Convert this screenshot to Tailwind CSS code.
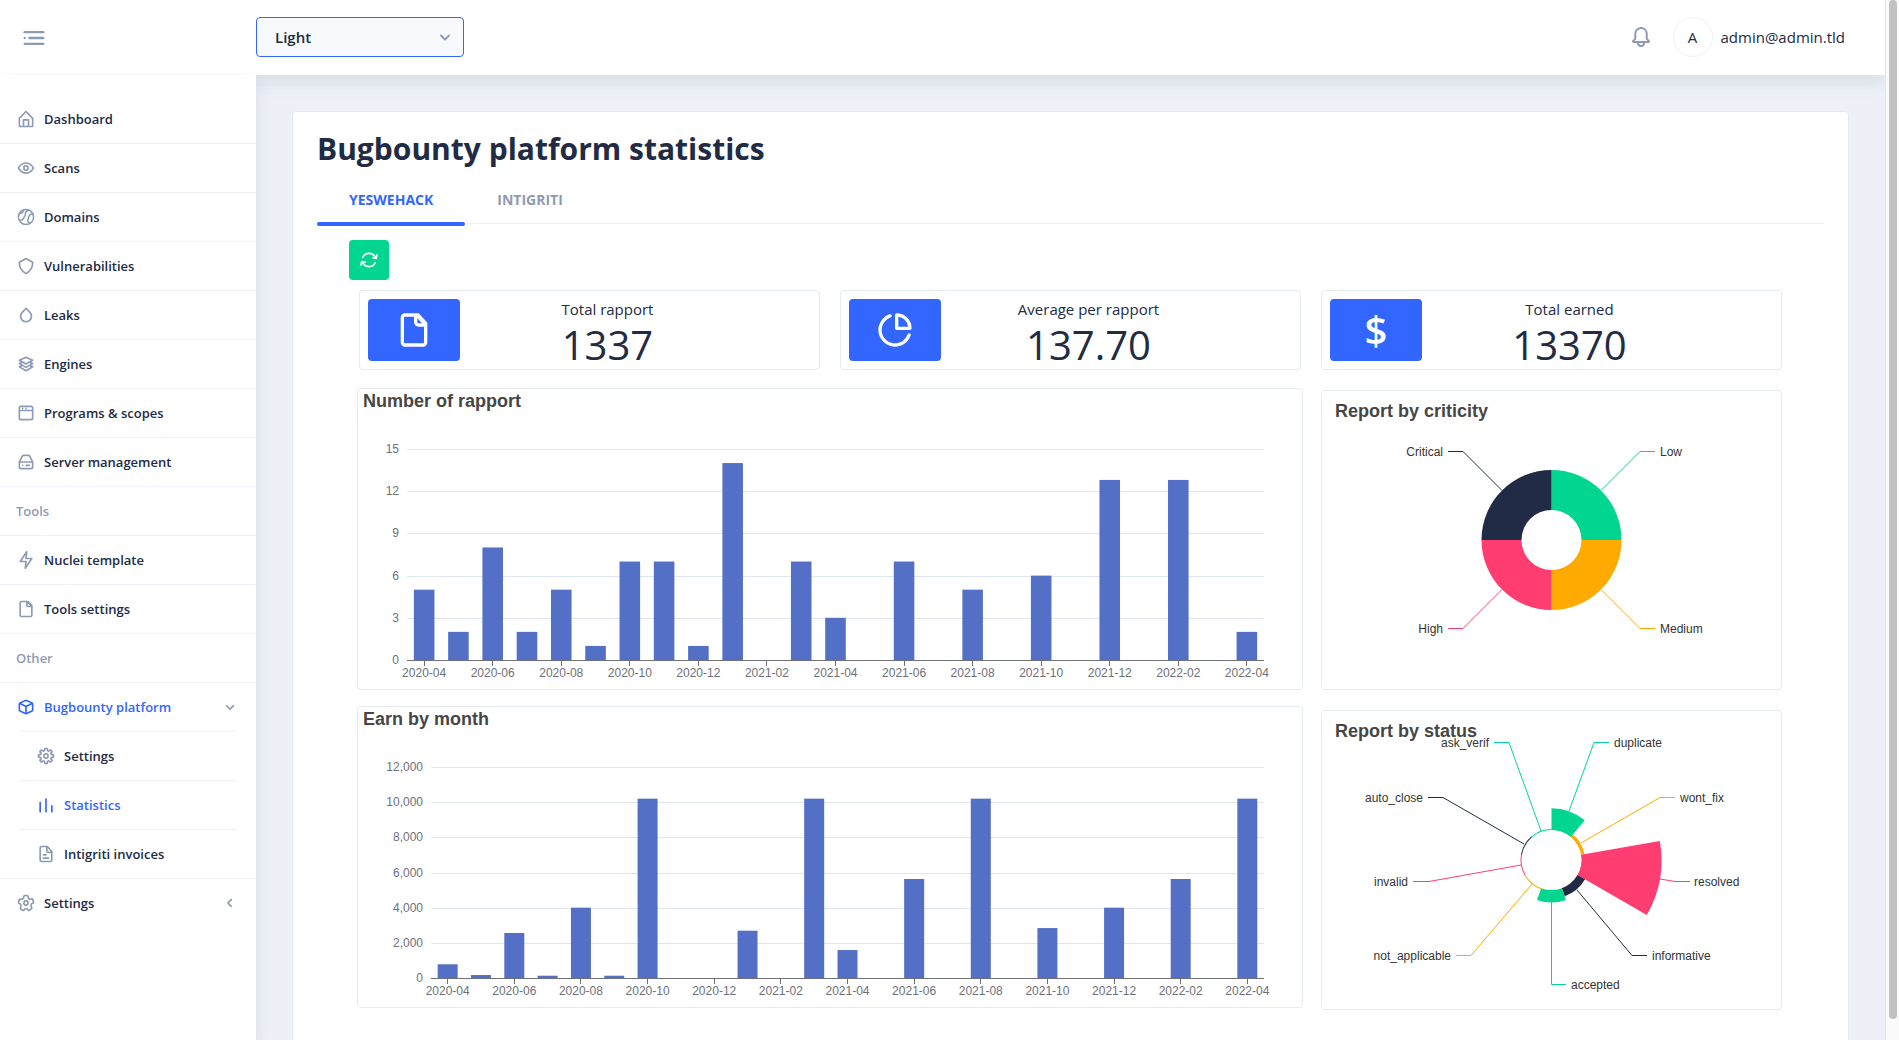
<!DOCTYPE html>
<html lang="en">
<head>
<meta charset="utf-8">
<title>Bugbounty platform statistics</title>
<meta name="viewport" content="width=device-width, initial-scale=1">
<script src="https://cdn.jsdelivr.net/npm/@tailwindcss/browser@4"></script>
</head>
<body class="flex h-screen overflow-hidden bg-[#edf1f7] font-['Open_Sans',sans-serif] text-[#222b45]">

<svg class="hidden" aria-hidden="true">
  <symbol id="i-menu" viewBox="0 0 24 24"><circle cx="4" cy="12" r="1"/><rect x="7" y="11" width="14" height="2" rx="1"/><rect x="3" y="16" width="18" height="2" rx="1"/><rect x="3" y="6" width="18" height="2" rx="1"/></symbol>
  <symbol id="i-down" viewBox="0 0 24 24"><path d="M12 15.5a1 1 0 0 1-.71-.29l-4-4a1 1 0 1 1 1.42-1.42L12 13.1l3.3-3.18a1 1 0 1 1 1.38 1.44l-4 3.86a1 1 0 0 1-.68.28z"/></symbol>
  <symbol id="i-left" viewBox="0 0 24 24"><path d="M13.36 17a1 1 0 0 1-.72-.31l-3.86-4a1 1 0 0 1 0-1.4l4-4a1 1 0 1 1 1.42 1.42L10.9 12l3.18 3.3a1 1 0 0 1 0 1.41 1 1 0 0 1-.72.29z"/></symbol>
  <symbol id="i-bell" viewBox="0 0 24 24"><path d="M20.52 15.21l-1.8-1.81V8.94a6.86 6.86 0 0 0-5.82-6.88 6.74 6.74 0 0 0-7.62 6.67v4.67l-1.8 1.81A1.64 1.64 0 0 0 4.64 18H8v.34A3.84 3.84 0 0 0 12 22a3.84 3.84 0 0 0 4-3.66V18h3.36a1.64 1.64 0 0 0 1.16-2.79zM14 18.34A1.88 1.88 0 0 1 12 20a1.88 1.88 0 0 1-2-1.66V18h4zM5.51 16l1.18-1.18a2 2 0 0 0 .59-1.42V8.73A4.73 4.73 0 0 1 8.9 5.17 4.67 4.67 0 0 1 12.64 4a4.86 4.86 0 0 1 4.08 4.9v4.5a2 2 0 0 0 .58 1.42L18.49 16z"/></symbol>
  <symbol id="i-home" viewBox="0 0 24 24"><path d="M20.42 10.18L12.71 2.3a1 1 0 0 0-1.42 0l-7.71 7.89A2 2 0 0 0 3 11.62V20a2 2 0 0 0 1.89 2h14.22A2 2 0 0 0 21 20v-8.38a2.07 2.07 0 0 0-.58-1.44zM10 20v-6h4v6zm9 0h-3v-7a1 1 0 0 0-1-1H9a1 1 0 0 0-1 1v7H5v-8.42l7-7.15 7 7.19z"/></symbol>
  <symbol id="i-eye" viewBox="0 0 24 24"><path d="M21.87 11.5c-.64-1.11-4.16-6.68-10.14-6.5-5.53.14-8.73 5-9.6 6.5a1 1 0 0 0 0 1c.63 1.09 4 6.5 9.89 6.5h.25c5.53-.14 8.74-5 9.6-6.5a1 1 0 0 0 0-1zM12.22 17c-4.31.1-7.12-3.59-8-5 1-1.61 3.61-4.9 7.61-5 4.29-.11 7.11 3.59 8 5-1.03 1.61-3.61 4.9-7.61 5z"/><path d="M12 8.5a3.5 3.5 0 1 0 3.5 3.5A3.5 3.5 0 0 0 12 8.5zm0 5a1.5 1.5 0 1 1 1.5-1.5 1.5 1.5 0 0 1-1.5 1.5z"/></symbol>
  <symbol id="i-globe" viewBox="0 0 24 24"><g fill="none" stroke="currentColor" stroke-width="1.8" stroke-linecap="round"><circle cx="12" cy="12" r="9.1"/><path d="M15.2 3.6c-3 1.4-4.400 3-4 5.200.4 2.400-1.600 2.600-2 4.600-.3 1.800-1.800 2.400-4.600 2.600"/><path d="M5 7.200c1.800.8 2.800.2 4.200-3.200"/><path d="M20.200 8.600c-2.800-.4-4.400 1-4.800 3.400-.3 1.900-1.600 2.600-1.300 4.600.3 1.700 1.500 2.400 2.700 2.900"/></g></symbol>
  <symbol id="i-shield" viewBox="0 0 24 24"><path d="M12 21.850a2 2 0 0 1-1-.25l-.3-.17A15.170 15.170 0 0 1 3 8.230v-.14a2 2 0 0 1 1-1.750l7-3.940a2 2 0 0 1 2 0l7 3.940a2 2 0 0 1 1 1.750v.14a15.170 15.170 0 0 1-7.720 13.200l-.3.17a2 2 0 0 1-.98.25zm0-17.700L5 8.090v.14a13.150 13.150 0 0 0 6.700 11.450l.3.17.3-.17A13.150 13.150 0 0 0 19 8.230v-.14z"/></symbol>
  <symbol id="i-drop" viewBox="0 0 24 24"><path d="M12 21.100a7.400 7.400 0 0 1-5.280-2.280 7.730 7.730 0 0 1 .1-10.770l4.640-4.650a.94.94 0 0 1 .71-.3 1 1 0 0 1 .71.31l4.560 4.720a7.730 7.730 0 0 1-.09 10.770A7.330 7.330 0 0 1 12 21.100zm.13-15.570L8.240 9.450a5.740 5.740 0 0 0-.07 8A5.430 5.430 0 0 0 12 19.100a5.420 5.420 0 0 0 3.900-1.610 5.720 5.720 0 0 0 .06-8z"/></symbol>
  <symbol id="i-layers" viewBox="0 0 24 24"><path d="M21 11.350a1 1 0 0 0-.61-.86l-2.150-.92 2.260-1.300a1 1 0 0 0 .5-.92 1 1 0 0 0-.61-.86l-8-3.410a1 1 0 0 0-.78 0l-8 3.410a1 1 0 0 0-.61.86 1 1 0 0 0 .5.92l2.260 1.300-2.150.92a1 1 0 0 0-.61.86 1 1 0 0 0 .5.92l2.260 1.300-2.150.92a1 1 0 0 0-.61.86 1 1 0 0 0 .5.92l8 4.600a1 1 0 0 0 1 0l8-4.600a1 1 0 0 0 .5-.92 1 1 0 0 0-.61-.86l-2.150-.92 2.260-1.300a1 1 0 0 0 .5-.92zm-9-6.260l5.760 2.450L12 10.850 6.240 7.540zm-.5 7.780a1 1 0 0 0 1 0l3.570-2 1.690.72L12 14.850l-5.760-3.310 1.690-.72zm6.260 2.670L12 18.850l-5.760-3.310 1.690-.72 3.570 2.050a1 1 0 0 0 1 0l3.570-2.050z"/></symbol>
  <symbol id="i-browser" viewBox="0 0 24 24"><path d="M18 3H6a3 3 0 0 0-3 3v12a3 3 0 0 0 3 3h12a3 3 0 0 0 3-3V6a3 3 0 0 0-3-3zM6 5h12a1 1 0 0 1 1 1v2H5V6a1 1 0 0 1 1-1zm12 14H6a1 1 0 0 1-1-1v-8h14v8a1 1 0 0 1-1 1z"/><circle cx="8" cy="6.500" r="1"/><circle cx="12" cy="6.500" r="1"/></symbol>
  <symbol id="i-drive" viewBox="0 0 24 24"><path d="M20.790 11.340l-3.340-6.680A3 3 0 0 0 14.760 3H9.240a3 3 0 0 0-2.690 1.660l-3.340 6.680a2 2 0 0 0-.21.9V18a3 3 0 0 0 3 3h12a3 3 0 0 0 3-3v-5.760a2 2 0 0 0-.21-.9zM8.340 5.550a1 1 0 0 1 .9-.55h5.520a1 1 0 0 1 .9.55L18.380 11H5.620zM18 19H6a1 1 0 0 1-1-1v-5h14v5a1 1 0 0 1-1 1z"/><path d="M16 15h-4a1 1 0 0 0 0 2h4a1 1 0 0 0 0-2z"/><circle cx="8" cy="16" r="1"/></symbol>
  <symbol id="i-flash" viewBox="0 0 24 24"><path d="M11.110 23a1 1 0 0 1-.34-.06 1 1 0 0 1-.65-1.050l.77-7.090H5a1 1 0 0 1-.83-1.560l7.890-11.800a1 1 0 0 1 1.170-.38 1 1 0 0 1 .65 1l-.77 7.140H19a1 1 0 0 1 .83 1.560l-7.890 11.800a1 1 0 0 1-.83.44zM6.870 12.800H12a1 1 0 0 1 .74.33 1 1 0 0 1 .25.78l-.45 4.150 4.590-6.860H12a1 1 0 0 1-1-1.110l.45-4.150z"/></symbol>
  <symbol id="i-file" viewBox="0 0 24 24"><path d="M19.740 7.330l-4.440-5a1 1 0 0 0-.74-.33h-8A2.530 2.530 0 0 0 4 4.500v15A2.530 2.530 0 0 0 6.560 22h10.880A2.530 2.530 0 0 0 20 19.500V8a1 1 0 0 0-.26-.67zM14 5l2.740 3h-2a.79.79 0 0 1-.74-.85zm3.440 15H6.560a.53.53 0 0 1-.56-.5v-15a.53.53 0 0 1 .56-.5H12v3.150A2.790 2.790 0 0 0 14.710 10H18v9.500a.53.53 0 0 1-.56.5z"/></symbol>
  <symbol id="i-filetext" viewBox="0 0 24 24"><path d="M15 16H9a1 1 0 0 0 0 2h6a1 1 0 0 0 0-2z"/><path d="M9 14h3a1 1 0 0 0 0-2H9a1 1 0 0 0 0 2z"/><path d="M19.740 8.330l-5.440-6a1 1 0 0 0-.74-.33h-7A2.530 2.530 0 0 0 4 4.500v15A2.530 2.530 0 0 0 6.560 22h10.880A2.530 2.530 0 0 0 20 19.500V9a1 1 0 0 0-.26-.67zM14 5l3.740 4h-3a.79.79 0 0 1-.74-.85zm3.440 15H6.560a.53.53 0 0 1-.56-.5v-15a.53.53 0 0 1 .56-.5H12v4.150A2.790 2.790 0 0 0 14.710 11H18v8.500a.53.53 0 0 1-.56.5z"/></symbol>
  <symbol id="i-cube" viewBox="0 0 24 24"><path d="M20.660 7.260c0-.07-.1-.14-.15-.21l-.09-.1a2.500 2.500 0 0 0-.86-.68l-6.400-3a2.700 2.700 0 0 0-2.260 0l-6.400 3a2.600 2.600 0 0 0-.86.68L3.520 7a1 1 0 0 0-.15.2A2.390 2.390 0 0 0 3 8.460v7.060a2.490 2.490 0 0 0 1.460 2.260l6.400 3a2.700 2.700 0 0 0 2.270 0l6.400-3A2.490 2.490 0 0 0 21 15.540V8.460a2.390 2.390 0 0 0-.34-1.200zm-8.950-2.200a.73.73 0 0 1 .58 0l5.330 2.480L12 10.150 6.380 7.540zM5.300 16a.47.47 0 0 1-.3-.43V9.100l6 2.790v6.720zm13.390 0L13 18.610v-6.720l6-2.790v6.440a.48.48 0 0 1-.31.46z"/></symbol>
  <symbol id="i-gear8" viewBox="0 0 24 24"><path d="M12.940 22h-1.890a1.680 1.680 0 0 1-1.680-1.680v-1.090a.34.34 0 0 0-.22-.29.38.38 0 0 0-.41 0l-.74.8a1.670 1.670 0 0 1-2.370 0L4.260 18.400a1.660 1.660 0 0 1-.5-1.190 1.720 1.720 0 0 1 .5-1.210l.74-.74a.34.34 0 0 0 0-.37c-.06-.15-.16-.26-.3-.26H3.680A1.690 1.690 0 0 1 2 12.940v-1.890a1.680 1.680 0 0 1 1.680-1.680h1.090a.34.34 0 0 0 .29-.22.38.38 0 0 0 0-.41L4.260 8a1.670 1.670 0 0 1 0-2.370L5.600 4.260a1.650 1.650 0 0 1 1.180-.5 1.720 1.720 0 0 1 1.220.5l.74.74a.34.34 0 0 0 .37 0c.15-.06.26-.16.26-.3V3.680A1.690 1.690 0 0 1 11.060 2H13a1.680 1.680 0 0 1 1.680 1.680v1.090a.34.34 0 0 0 .22.29.38.38 0 0 0 .41 0l.69-.8a1.670 1.670 0 0 1 2.370 0l1.370 1.340a1.670 1.670 0 0 1 .5 1.190 1.630 1.630 0 0 1-.5 1.180l-.74.74a.34.34 0 0 0 0 .37c.06.15.16.26.3.26h1.090A1.690 1.690 0 0 1 22 11.060V13a1.680 1.680 0 0 1-1.680 1.680h-1.090a.34.34 0 0 0-.29.22.34.34 0 0 0 0 .37l.77.77a1.670 1.670 0 0 1 0 2.370l-1.310 1.330a1.650 1.650 0 0 1-1.180.5 1.720 1.720 0 0 1-1.190-.5l-.77-.74a.34.34 0 0 0-.37 0c-.15.06-.26.16-.26.3v1.090A1.690 1.690 0 0 1 12.940 22zm-1.570-2h1.260v-.77a2.330 2.330 0 0 1 1.460-2.140 2.360 2.360 0 0 1 2.590.47l.54.54.88-.88-.54-.55a2.340 2.340 0 0 1-.48-2.560 2.330 2.330 0 0 1 2.140-1.450H20v-1.290h-.77a2.330 2.330 0 0 1-2.140-1.460 2.360 2.360 0 0 1 .47-2.590l.54-.54-.88-.88-.55.54a2.390 2.390 0 0 1-4-1.670V4h-1.300v.77a2.330 2.330 0 0 1-1.460 2.140 2.360 2.360 0 0 1-2.590-.47l-.54-.54-.88.88.54.55a2.390 2.390 0 0 1-1.670 4H4v1.260h.77a2.330 2.330 0 0 1 2.140 1.460 2.360 2.360 0 0 1-.47 2.590l-.54.54.88.88.55-.54a2.390 2.390 0 0 1 4 1.670z"/><path d="M12 15.500a3.500 3.500 0 1 1 3.500-3.500 3.500 3.500 0 0 1-3.500 3.500zm0-5a1.500 1.500 0 1 0 1.500 1.500 1.500 1.500 0 0 0-1.500-1.500z"/></symbol>
  <symbol id="i-gear5" viewBox="0 0 24 24"><path d="M8.610 22a2.250 2.250 0 0 1-1.350-.46L5.190 20a2.370 2.370 0 0 1-.49-3.220 2.060 2.060 0 0 0 .23-1.860l-.06-.16a1.830 1.830 0 0 0-1.120-1.220h-.16a2.340 2.340 0 0 1-1.480-2.940L2.930 8a2.180 2.180 0 0 1 1.120-1.410 2.140 2.140 0 0 1 1.680-.12 1.930 1.930 0 0 0 1.780-.29l.13-.1a1.940 1.940 0 0 0 .73-1.510v-.24A2.320 2.320 0 0 1 10.660 2h2.550a2.260 2.260 0 0 1 1.600.67 2.370 2.370 0 0 1 .68 1.680v.28a1.760 1.760 0 0 0 .69 1.430l.11.08a1.740 1.740 0 0 0 1.590.26l.34-.11A2.260 2.260 0 0 1 21.100 7.800l.79 2.520a2.360 2.360 0 0 1-1.460 2.930l-.2.07A1.890 1.890 0 0 0 19 14.600a2 2 0 0 0 .25 1.650l.26.38a2.380 2.380 0 0 1-.5 3.230L17 21.410a2.240 2.240 0 0 1-3.220-.53l-.12-.17a1.750 1.750 0 0 0-1.500-.78 1.800 1.800 0 0 0-1.430.77l-.23.33A2.250 2.250 0 0 1 9 22a2 2 0 0 1-.39 0zM4.400 11.620a3.830 3.830 0 0 1 2.380 2.500v.12a4 4 0 0 1-.46 3.620.38.38 0 0 0 0 .51L8.470 20a.25.25 0 0 0 .37-.07l.23-.33a3.770 3.770 0 0 1 6.200 0l.12.18a.3.3 0 0 0 .18.12.25.25 0 0 0 .19-.05l2.060-1.560a.36.36 0 0 0 .07-.49l-.26-.38A4 4 0 0 1 17.100 14a3.920 3.920 0 0 1 2.490-2.610l.2-.07a.34.34 0 0 0 .19-.44l-.78-2.490a.35.35 0 0 0-.2-.19.21.21 0 0 0-.19 0l-.34.11a3.740 3.740 0 0 1-3.430-.57L15 7.650a3.760 3.760 0 0 1-1.490-3v-.31a.37.37 0 0 0-.1-.26.31.31 0 0 0-.21-.08h-2.540a.31.31 0 0 0-.29.33v.25a3.900 3.900 0 0 1-1.520 3.090l-.13.1a3.910 3.910 0 0 1-3.630.59.22.22 0 0 0-.14 0 .28.28 0 0 0-.12.15L4 11.120a.36.36 0 0 0 .22.45z"/><path d="M12 15.500a3.500 3.500 0 1 1 3.500-3.500 3.500 3.500 0 0 1-3.500 3.500zm0-5a1.500 1.500 0 1 0 1.500 1.500 1.500 1.500 0 0 0-1.500-1.500z"/></symbol>
  <symbol id="i-bars" viewBox="0 0 24 24"><rect x="4" y="8" width="2" height="13" rx="1"/><rect x="11" y="4" width="2" height="17" rx="1"/><rect x="18" y="12" width="2" height="9" rx="1"/></symbol>
  <symbol id="i-pie" viewBox="0 0 24 24"><path d="M13 2a1 1 0 0 0-1 1v8a1 1 0 0 0 1 1h8a1 1 0 0 0 1-1 9 9 0 0 0-9-9zm1 8V4.070A7 7 0 0 1 19.930 10z"/><path d="M20.820 14.060a1 1 0 0 0-1.280.61A8 8 0 1 1 9.330 4.460a1 1 0 0 0-.66-1.890 10 10 0 1 0 12.760 12.760 1 1 0 0 0-.61-1.270z"/></symbol>
  <symbol id="i-sync" viewBox="0 0 24 24"><path d="M21.660 10.370a.62.62 0 0 0 .07-.19l.75-4a1 1 0 0 0-2-.36l-.37 2a9.220 9.220 0 0 0-16.580.84 1 1 0 0 0 .55 1.300 1 1 0 0 0 1.310-.55A7.080 7.080 0 0 1 12.070 5a7.170 7.170 0 0 1 6.240 3.580l-1.650-.27a1 1 0 1 0-.32 2l4.250.71h.16a.93.93 0 0 0 .34-.06.33.33 0 0 0 .1-.06.78.78 0 0 0 .2-.11l.08-.1a1.070 1.070 0 0 0 .14-.16.58.58 0 0 0 .05-.16z"/><path d="M19.880 14.070a1 1 0 0 0-1.310.56A7.080 7.080 0 0 1 11.930 19a7.170 7.170 0 0 1-6.240-3.580l1.650.27h.16a1 1 0 0 0 .16-2L3.410 13a.91.91 0 0 0-.33 0H3a1.150 1.150 0 0 0-.32.14 1 1 0 0 0-.18.18l-.09.1a.84.84 0 0 0-.07.19.44.44 0 0 0-.07.17l-.75 4a1 1 0 0 0 .8 1.220h.18a1 1 0 0 0 1-.82l.37-2a9.220 9.220 0 0 0 16.580-.83 1 1 0 0 0-.57-1.280z"/></symbol>
</svg>

<div class="flex h-full min-w-0 flex-1 flex-col overflow-hidden">
  <header class="relative z-10 flex h-[75px] shrink-0 items-center bg-white pr-10 pb-px shadow-[0_8px_16px_0_rgba(44,51,73,0.1)]">
    <div class="w-64 pt-px pl-5">
      <button type="button" aria-label="Toggle menu" class="block text-[#8f9bb3]"><svg class="size-7 fill-current"><use href="#i-menu"/></svg></button>
    </div>
    <div class="relative w-52">
      <select aria-label="Theme" class="block h-10 w-full appearance-none rounded border border-[#3366ff] bg-[#f7f9fc] pl-[18px] text-[15px] leading-6 font-semibold text-[#222b45] outline-none">
        <option>Light</option><option>Dark</option>
      </select>
      <svg class="pointer-events-none absolute top-2 right-[7px] size-6 fill-[#8f9bb3]"><use href="#i-down"/></svg>
    </div>
    <div class="ml-auto flex items-center">
      <button type="button" aria-label="Notifications" class="mr-5 text-[#8f9bb3]"><svg class="size-6 fill-current"><use href="#i-bell"/></svg></button>
      <span class="mr-2 flex size-10 items-center justify-center rounded-full border border-[#edf1f7] text-[15px]">A</span>
      <span class="text-[15px] leading-6">admin@admin.tld</span>
    </div>
  </header>

  <div class="flex min-h-0 flex-1">
    <nav class="z-20 w-64 shrink-0 bg-white pt-5 text-[13px] leading-6 font-semibold shadow-[0_8px_16px_0_rgba(44,51,73,0.1)]">
      <ul>
        <li class="border-b border-[#edf1f7]"><a href="#" class="flex items-center gap-2 px-4 py-3"><svg class="size-5 fill-[#8f9bb3]"><use href="#i-home"/></svg>Dashboard</a></li>
        <li class="border-b border-[#edf1f7]"><a href="#" class="flex items-center gap-2 px-4 py-3"><svg class="size-5 fill-[#8f9bb3]"><use href="#i-eye"/></svg>Scans</a></li>
        <li class="border-b border-[#edf1f7]"><a href="#" class="flex items-center gap-2 px-4 py-3"><svg class="size-5 text-[#8f9bb3]"><use href="#i-globe"/></svg>Domains</a></li>
        <li class="border-b border-[#edf1f7]"><a href="#" class="flex items-center gap-2 px-4 py-3"><svg class="size-5 fill-[#8f9bb3]"><use href="#i-shield"/></svg>Vulnerabilities</a></li>
        <li class="border-b border-[#edf1f7]"><a href="#" class="flex items-center gap-2 px-4 py-3"><svg class="size-5 fill-[#8f9bb3]"><use href="#i-drop"/></svg>Leaks</a></li>
        <li class="border-b border-[#edf1f7]"><a href="#" class="flex items-center gap-2 px-4 py-3"><svg class="size-5 fill-[#8f9bb3]"><use href="#i-layers"/></svg>Engines</a></li>
        <li class="border-b border-[#edf1f7]"><a href="#" class="flex items-center gap-2 px-4 py-3"><svg class="size-5 fill-[#8f9bb3]"><use href="#i-browser"/></svg>Programs &amp; scopes</a></li>
        <li class="border-b border-[#edf1f7]"><a href="#" class="flex items-center gap-2 px-4 py-3"><svg class="size-5 fill-[#8f9bb3]"><use href="#i-drive"/></svg>Server management</a></li>
        <li class="border-b border-[#edf1f7] px-4 py-3 text-[#8f9bb3]">Tools</li>
        <li class="border-b border-[#edf1f7]"><a href="#" class="flex items-center gap-2 px-4 py-3"><svg class="size-5 fill-[#8f9bb3]"><use href="#i-flash"/></svg>Nuclei template</a></li>
        <li class="border-b border-[#edf1f7]"><a href="#" class="flex items-center gap-2 px-4 py-3"><svg class="size-5 fill-[#8f9bb3]"><use href="#i-file"/></svg>Tools settings</a></li>
        <li class="border-b border-[#edf1f7] px-4 py-3 text-[#8f9bb3]">Other</li>
        <li class="border-b border-[#edf1f7]">
          <a href="#" class="flex items-center gap-2 px-4 py-3 text-[#3366ff]"><svg class="size-5 fill-current"><use href="#i-cube"/></svg>Bugbounty platform<svg class="ml-auto size-5 fill-[#8f9bb3]"><use href="#i-down"/></svg></a>
          <ul class="mx-5 divide-y divide-[#edf1f7] border-t border-[#edf1f7]">
            <li><a href="#" class="flex items-center gap-2 px-4 py-3"><svg class="size-5 fill-[#8f9bb3]"><use href="#i-gear8"/></svg>Settings</a></li>
            <li><a href="#" class="flex items-center gap-2 px-4 py-3 text-[#3366ff]"><svg class="size-5 fill-current"><use href="#i-bars"/></svg>Statistics</a></li>
            <li><a href="#" class="flex items-center gap-2 px-4 py-3"><svg class="size-5 fill-[#8f9bb3]"><use href="#i-filetext"/></svg>Intigriti invoices</a></li>
          </ul>
        </li>
        <li><a href="#" class="flex items-center gap-2 px-4 py-3"><svg class="size-5 fill-[#8f9bb3]"><use href="#i-gear5"/></svg>Settings<svg class="ml-auto size-5 fill-[#8f9bb3]"><use href="#i-left"/></svg></a></li>
      </ul>
    </nav>

    <main class="min-w-0 flex-1 overflow-hidden p-9">
      <section class="rounded border border-[#e4e9f2] bg-white px-6 pt-4 pb-16">
        <h1 class="text-[30px] leading-[42px] font-bold">Bugbounty platform statistics</h1>

        <div role="tablist" class="mt-[6px] flex h-12 border-b border-[#edf1f7] text-sm leading-4 font-bold uppercase">
          <button type="button" role="tab" aria-selected="true" class="relative px-8 pt-px font-bold text-[#3366ff] uppercase">Yeswehack<span class="absolute inset-x-0 -bottom-[3px] h-1 rounded-sm bg-[#3366ff]"></span></button>
          <button type="button" role="tab" aria-selected="false" class="px-8 pt-px font-bold text-[#8f9bb3] uppercase">Intigriti</button>
        </div>

        <div class="px-8 pt-4">
          <button type="button" aria-label="Refresh" class="flex size-10 items-center justify-center rounded bg-[#00d68f] text-white"><svg class="size-5 fill-current"><use href="#i-sync"/></svg></button>

          <div class="mt-[10px] grid grid-cols-3 gap-5 px-[10px]">
            <article class="grid grid-cols-[92px_1fr_56px] rounded border border-[#e4e9f2] p-2">
              <div class="flex h-[62px] items-center justify-center rounded bg-[#3366ff]"><svg class="size-10 fill-white"><use href="#i-file"/></svg></div>
              <div class="h-[62px] text-center"><p class="text-[15px] leading-5">Total rapport</p><p class="text-[40px] leading-[52px]">1337</p></div>
            </article>
            <article class="grid grid-cols-[92px_1fr_56px] rounded border border-[#e4e9f2] p-2">
              <div class="flex h-[62px] items-center justify-center rounded bg-[#3366ff]"><svg class="size-10 fill-white"><use href="#i-pie"/></svg></div>
              <div class="h-[62px] text-center"><p class="text-[15px] leading-5">Average per rapport</p><p class="text-[40px] leading-[52px]">137.70</p></div>
            </article>
            <article class="grid grid-cols-[92px_1fr_56px] rounded border border-[#e4e9f2] p-2">
              <div class="flex h-[62px] items-center justify-center rounded bg-[#3366ff] text-[40px] leading-none font-semibold text-white">$</div>
              <div class="h-[62px] text-center"><p class="text-[15px] leading-5">Total earned</p><p class="text-[40px] leading-[52px]">13370</p></div>
            </article>
          </div>

          <div class="flex">
            <div class="flex w-2/3 flex-col gap-4 px-2 pt-[18px]">
              <figure class="rounded border border-[#e4e9f2]"><svg id="reports" class="block w-full" viewBox="0 0 944 300" role="img" aria-label="Number of rapport"></svg></figure>
              <figure class="rounded border border-[#e4e9f2]"><svg id="earnings" class="block w-full" viewBox="0 0 944 300" role="img" aria-label="Earn by month"></svg></figure>
            </div>
            <div class="flex w-1/3 flex-col gap-5 px-[10px] pt-5">
              <figure class="rounded border border-[#e4e9f2]"><svg id="criticity" class="block w-full" viewBox="0 0 459 298" role="img" aria-label="Report by criticity"></svg></figure>
              <figure class="rounded border border-[#e4e9f2]"><svg id="status" class="block w-full" viewBox="0 0 459 298" role="img" aria-label="Report by status"></svg></figure>
            </div>
          </div>
        </div>
      </section>
    </main>
  </div>
</div>

<div class="flex w-[14px] shrink-0 justify-center border-l border-[#e8e8e8] bg-[#fafafa]" aria-hidden="true"><div class="h-[98%] w-2 rounded-full bg-[#c1c1c1]"></div></div>

<script>
const FONT = '"Liberation Sans", Arial, sans-serif';
const text = (x, y, s, anchor, size, fill, weight) =>
  `<text x="${x}" y="${y}" text-anchor="${anchor}" font-family='${FONT}' font-size="${size}" font-weight="${weight || 400}" fill="${fill}">${s}</text>`;

/* Monthly bar chart: one band per month, every other month labelled. */
function barChart(id, title, left, max, step, values) {
  const right = 906, top = 60, bottom = 271, band = (right - left) / values.length;
  let out = text(5, 18, title, 'start', 18, '#464646', 700);
  for (let v = 0; v <= max; v += step) {
    const y = Math.round(bottom - v / max * (bottom - top)) + 0.5;
    if (v) out += `<path d="M${left} ${y}H${right}" stroke="#e0e6f1"/>`;
    out += text(left - 8, y + 3, v.toLocaleString('en-US'), 'end', 12, '#6e7079');
  }
  values.forEach((v, i) => {
    const c = left + band * (i + 0.5), h = v / max * (bottom - top);
    if (v) out += `<rect x="${c - band * 0.3}" y="${bottom - h}" width="${band * 0.6}" height="${h}" fill="#5470c6"/>`;
    if (i % 2 === 0) {
      const m = 3 + i, label = `${2020 + Math.floor(m / 12)}-${String(m % 12 + 1).padStart(2, '0')}`;
      out += `<path d="M${Math.floor(c) + 0.5} ${bottom}v6" stroke="#6e7079"/>` + text(c, 288, label, 'middle', 12, '#6e7079');
    }
  });
  out += `<path d="M${left} ${bottom + 0.5}H${right}" stroke="#6e7079"/>`;
  document.getElementById(id).innerHTML = out;
}

/* Ring or rose chart: equal angles, a radius per slice, and a leader line to each label. */
function pieChart(id, title, slices) {
  const cx = 229.5, cy = 149, r = 30, a = 2 * Math.PI / slices.length;
  const at = (rad, ang) => `${cx + rad * Math.sin(ang)} ${cy - rad * Math.cos(ang)}`;
  let out = text(13, 26, title, 'start', 18, '#464646', 700);
  slices.forEach(([name, color, R, line, tx], i) => {
    const s = i * a, e = s + a;
    out += `<path d="M${at(r, s)}L${at(R, s)}A${R} ${R} 0 0 1 ${at(R, e)}L${at(r, e)}A${r} ${r} 0 0 0 ${at(r, s)}Z" fill="${color}"/>`;
    out += `<polyline points="${line.join(' ')}" fill="none" stroke="${color}"/>`;
    out += text(tx, line[5] + 4, name, tx > cx ? 'start' : 'end', 12, '#333');
  });
  document.getElementById(id).innerHTML = out;
}

barChart('reports', 'Number of rapport', 49, 15, 3,
  [5, 2, 8, 2, 5, 1, 7, 7, 1, 14, 0, 7, 3, 0, 7, 0, 5, 0, 6, 0, 12.8, 0, 12.8, 0, 2]);
barChart('earnings', 'Earn by month', 73, 12000, 2000,
  [780, 170, 2560, 130, 4000, 130, 10200, 0, 0, 2690, 0, 10200, 1590, 0, 5630, 0, 10200, 0, 2840, 0, 4000, 0, 5630, 0, 10200]);

const green = '#00d68f', orange = '#ffaa00', pink = '#ff3d71', navy = '#222b45';
pieChart('criticity', 'Report by criticity', [
  ['Low', green, 70, [279, 99.5, 318, 60.5, 333, 60.5], 338],
  ['Medium', orange, 70, [279, 198.5, 318, 237.5, 333, 237.5], 338],
  ['High', pink, 70, [180, 198.5, 141, 237.5, 126, 237.5], 121],
  ['Critical', navy, 70, [180, 99.5, 141, 60.5, 126, 60.5], 121],
]);
pieChart('status', 'Report by status', [
  ['duplicate', green, 51.8, [247, 100, 272, 31.5, 287, 31.5], 292],
  ['wont_fix', orange, 33.4, [259, 132, 338, 86.5, 353, 86.5], 358],
  ['resolved', pink, 110, [338, 168, 353, 170.5, 368, 170.5], 372],
  ['informative', navy, 38.7, [255, 179, 310, 244.5, 325, 244.5], 330],
  ['accepted', green, 42.5, [229.5, 191, 229.5, 273.5, 244, 273.5], 249],
  ['not_applicable', orange, 31, [210, 173, 149, 244.5, 134, 244.5], 129],
  ['invalid', pink, 31, [199, 154, 107, 170.5, 91, 170.5], 86],
  ['auto_close', navy, 31, [202, 133, 121, 86.5, 106, 86.5], 101],
  ['ask_verif', green, 31, [219, 120, 187, 31.5, 172, 31.5], 167],
]);
</script>
</body>
</html>
